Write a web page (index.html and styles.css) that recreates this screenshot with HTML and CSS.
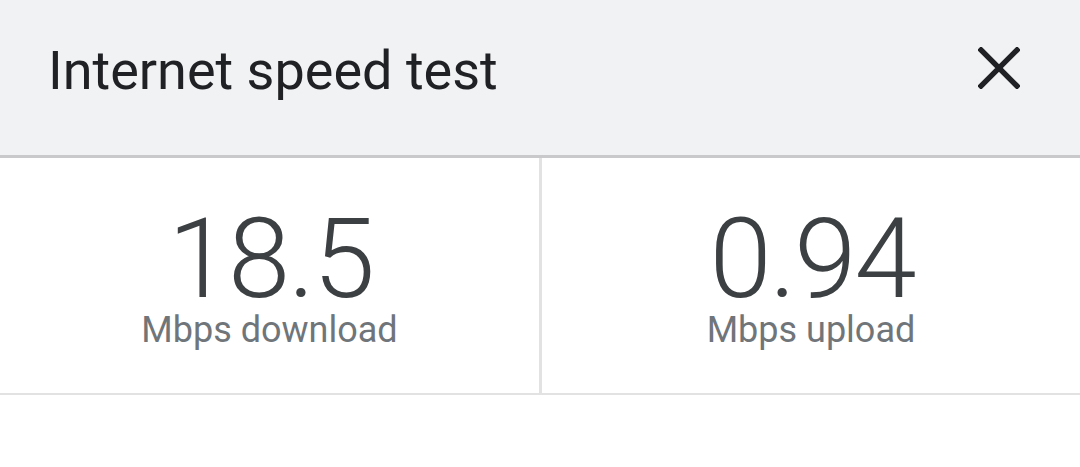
FILE: index.html
```html
<!DOCTYPE html>
<html>
<head>
<meta charset="utf-8">
<link rel="stylesheet" href="styles.css">
</head>
<body>
<div class="card">
  <header class="header">
    <h1 class="title">Internet speed test</h1>
    <button class="close" aria-label="Close">
      <svg width="42" height="42" viewBox="0 0 42 42"><path d="M3 3 L39 39 M39 3 L3 39" stroke="#202124" stroke-width="5.4" stroke-linecap="square" fill="none"/></svg>
    </button>
  </header>
  <section class="stats">
    <div class="stat">
      <div class="value">18.5</div>
      <div class="label">Mbps download</div>
    </div>
    <div class="stat stat-right">
      <div class="value">0.94</div>
      <div class="label">Mbps upload</div>
    </div>
  </section>
</div>
</body>
</html>
```

FILE: styles.css
```css
html, body {
  margin: 0;
  padding: 0;
  background: #ffffff;
  font-family: Roboto, "Liberation Sans", sans-serif;
}
.card {
  width: 1080px;
}
.header {
  box-sizing: border-box;
  height: 158px;
  background: #f1f2f4;
  border-bottom: 3px solid #c9c9cb;
  display: flex;
  justify-content: space-between;
  align-items: flex-start;
  padding: 39px 0 0 48px;
}
.title {
  margin: 0;
  font-size: 54px;
  font-weight: 400;
  line-height: 64px;
  color: #202124;
}
.close {
  border: none;
  background: none;
  padding: 0;
  margin: 8px 60px 0 0;
  width: 42px;
  height: 42px;
  display: flex;
}
.stats {
  display: grid;
  grid-template-columns: 539px 1fr;
  border-bottom: 2px solid #e2e2e2;
}
.stat {
  display: flex;
  flex-direction: column;
  align-items: center;
  padding: 53px 0 0;
  height: 235px;
  box-sizing: border-box;
}
.stat-right {
  border-left: 3px solid #e2e2e2;
}
.value {
  font-size: 112px;
  font-weight: 300;
  line-height: 96px;
  letter-spacing: -2px;
  margin-right: -2px;
  color: #3c4043;
}
.label {
  font-size: 36px;
  line-height: 36px;
  color: #70757a;
  margin-top: 5px;
}
```
